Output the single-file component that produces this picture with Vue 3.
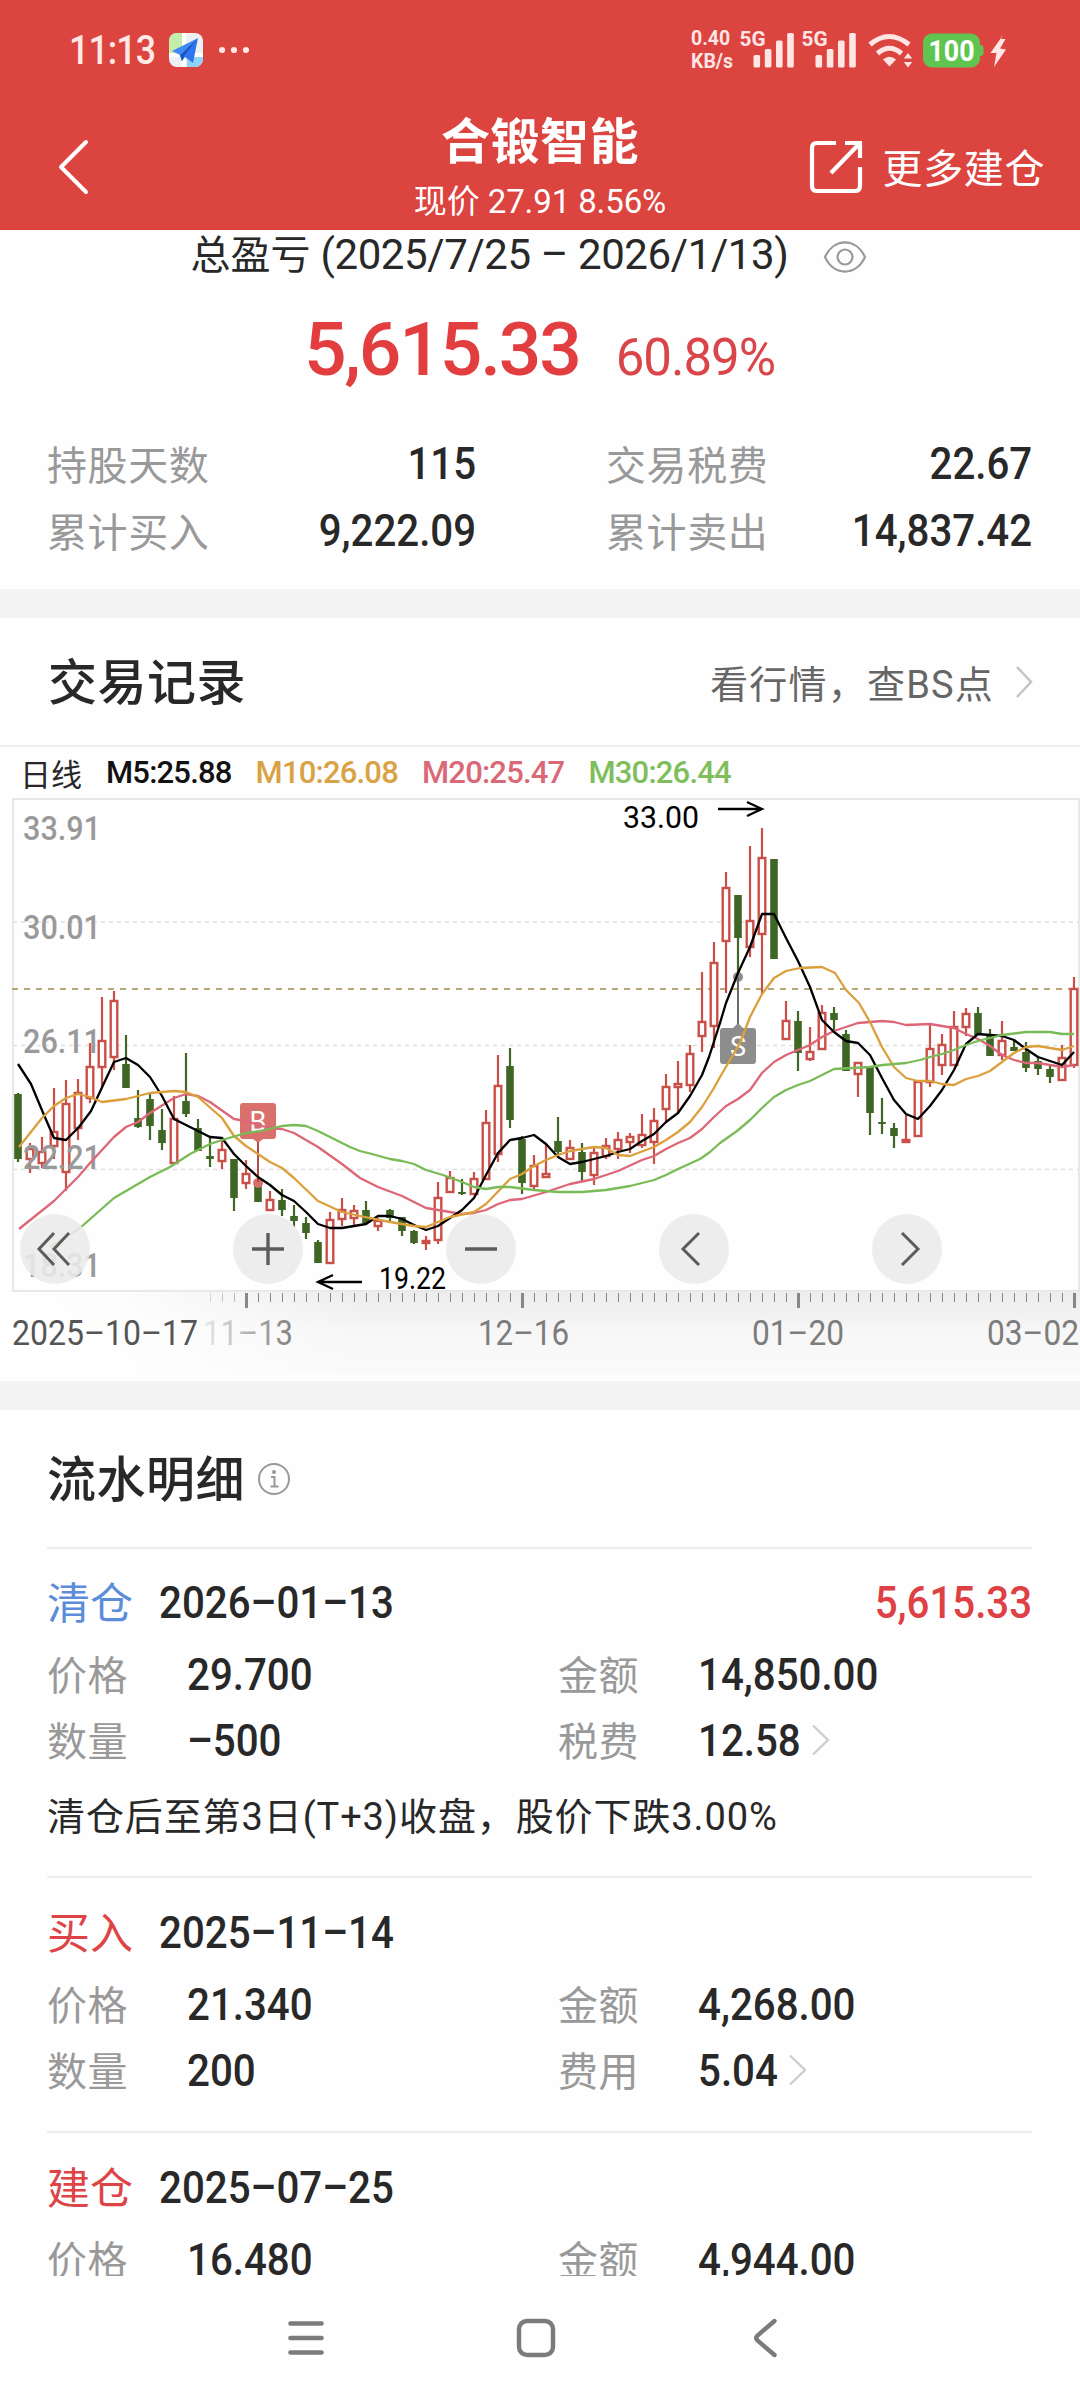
<script setup>
// Candles: [direction, high, bodyTop, bodyBottom, low], one every 12px from x=18
const raw = [
  'G 1093 1094 1159 1162', 'R 1143 1149 1159 1173', 'R 1137 1152 1163 1168', 'R 1088 1132 1146 1159',
  'R 1080 1104 1172 1191', 'R 1079 1093 1128 1140', 'R 1043 1067 1098 1103', 'R 997 1041 1067 1088',
  'R 991 1001 1057 1070', 'G 1035 1064 1088 1088', 'G 1090 1118 1127 1128', 'G 1093 1099 1126 1140',
  'G 1109 1130 1143 1150', 'R 1096 1119 1163 1163', 'G 1053 1101 1114 1117', 'G 1119 1128 1151 1151',
  'G 1137 1156 1159 1167', 'R 1137 1150 1161 1169', 'G 1159 1159 1198 1211', 'R 1160 1174 1183 1189',
  'G 1184 1184 1202 1202', 'R 1191 1200 1210 1210', 'G 1189 1200 1210 1216', 'G 1205 1216 1221 1227',
  'G 1217 1223 1233 1239', 'G 1240 1242 1263 1263', 'R 1212 1220 1263 1263', 'R 1198 1210 1219 1226',
  'R 1205 1211 1218 1226', 'G 1201 1210 1223 1223', 'R 1218 1221 1226 1231', 'G 1209 1210 1218 1223',
  'G 1217 1217 1231 1236', 'G 1230 1231 1243 1244', 'R 1236 1241 1243 1250', 'R 1182 1198 1240 1244',
  'R 1171 1178 1192 1193', 'G 1179 1192 1194 1195', 'R 1172 1179 1194 1194', 'R 1110 1123 1179 1180',
  'R 1055 1086 1154 1162', 'G 1048 1066 1120 1128', 'G 1136 1139 1183 1194', 'R 1155 1166 1186 1189',
  'R 1145 1174 1177 1177', 'G 1117 1141 1152 1157', 'R 1140 1148 1159 1159', 'G 1143 1152 1172 1181',
  'R 1147 1153 1175 1185', 'R 1138 1146 1156 1159', 'R 1132 1140 1149 1159', 'R 1133 1137 1142 1153',
  'R 1114 1135 1145 1148', 'R 1108 1121 1142 1164', 'R 1074 1087 1109 1121', 'R 1061 1084 1087 1112',
  'R 1045 1054 1085 1092', 'R 972 1022 1036 1052', 'R 942 963 1026 1048', 'R 872 888 941 993',
  'G 895 895 938 977', 'R 846 921 947 957', 'R 828 858 934 994', 'G 859 859 959 959',
  'R 1001 1021 1039 1039', 'G 1011 1021 1053 1071', 'R 1027 1052 1059 1061', 'R 1005 1013 1049 1049',
  'G 1007 1013 1020 1033', 'G 1030 1034 1071 1071', 'R 1062 1063 1074 1097', 'G 1067 1067 1113 1135',
  'G 1098 1122 1124 1134', 'G 1123 1128 1136 1148', 'R 1115 1140 1142 1142', 'R 1081 1082 1136 1136',
  'R 1025 1049 1082 1087', 'R 1034 1045 1065 1075', 'R 1011 1027 1065 1066', 'R 1008 1014 1027 1036',
  'G 1007 1013 1035 1035', 'G 1029 1034 1056 1056', 'R 1021 1041 1055 1060', 'G 1041 1047 1051 1051',
  'G 1042 1052 1068 1072', 'G 1057 1061 1069 1075', 'G 1065 1069 1077 1083', 'R 1045 1058 1080 1081',
  'R 977 989 1065 1068',
]
const candles = raw.map((s, i) => {
  const [t, h, a, b, l] = s.split(' ')
  return { up: t === 'R', h: +h, a: +a, b: +b, l: +l, x: 18 + 12 * i }
})

const lines = [
  { color: '#dd6678', pts: '19,1229 54,1201 78,1177 90,1163 114,1137 126,1127 138,1122 150,1113 174,1098 186,1094 198,1096 210,1102 234,1119 246,1121 258,1125 270,1128 282,1129 294,1133 306,1140 318,1147 342,1164 360,1178 378,1187 402,1196 426,1208 450,1212 462,1214 474,1213 486,1210 498,1204 510,1200 522,1199 546,1192 570,1184 594,1179 618,1171 642,1160 654,1156 666,1149 678,1143 690,1138 702,1129 714,1117 726,1106 738,1099 750,1090 762,1073 774,1062 786,1055 798,1050 810,1045 822,1037 834,1031 858,1023 882,1021 894,1022 906,1025 930,1024 942,1026 954,1028 966,1034 978,1039 990,1046 1002,1055 1014,1060 1026,1063 1038,1063 1062,1067 1074,1065' },
  { color: '#000', pts: '18,1064 31,1084 44,1115 54,1138 66,1140 79,1127 91,1111 105,1081 114,1062 126,1058 138,1065 150,1077 162,1096 174,1119 186,1125 198,1131 210,1137 222,1138 234,1154 246,1166 258,1177 270,1185 282,1195 294,1201 306,1212 318,1224 330,1228 342,1228 354,1226 366,1224 378,1216 390,1216 402,1219 414,1225 426,1230 438,1226 450,1218 462,1210 474,1198 486,1175 498,1153 510,1140 522,1138 534,1135 546,1144 558,1157 570,1164 582,1162 594,1159 606,1156 618,1152 630,1149 642,1141 654,1134 666,1122 678,1113 690,1096 702,1075 709,1057 720,1023 726,1003 738,973 750,947 762,914 774,914 786,938 798,961 810,987 822,1020 834,1032 846,1041 858,1043 870,1055 882,1078 894,1100 906,1114 918,1119 930,1106 942,1090 954,1070 966,1044 978,1034 990,1035 1002,1036 1014,1040 1026,1049 1038,1057 1050,1061 1062,1065 1074,1052' },
  { color: '#dba03c', pts: '19,1147 42,1118 54,1106 66,1098 78,1094 90,1097 102,1102 126,1099 150,1093 174,1091 186,1092 198,1097 222,1118 234,1136 246,1146 270,1162 282,1168 294,1178 318,1201 342,1212 360,1216 390,1222 414,1226 426,1227 438,1222 450,1217 474,1212 486,1204 510,1179 522,1174 534,1166 546,1160 558,1155 570,1151 594,1147 606,1148 618,1155 630,1156 654,1147 666,1140 678,1132 690,1122 702,1107 714,1088 720,1077 740,1043 750,1017 762,994 774,978 786,971 800,968 822,967 835,973 846,990 859,1003 870,1022 882,1047 894,1067 906,1078 918,1081 930,1081 942,1084 954,1085 966,1079 978,1076 990,1071 1002,1062 1014,1053 1026,1047 1038,1046 1062,1050 1074,1046' },
  { color: '#79bb56', pts: '50,1247 80,1228 114,1198 150,1177 170,1167 190,1154 210,1144 222,1140 246,1133 260,1131 282,1126 294,1125 306,1126 318,1131 350,1147 360,1151 372,1154 390,1159 402,1161 414,1164 426,1170 443,1175 462,1182 474,1187 486,1189 498,1187 510,1187 534,1190 558,1192 582,1192 606,1190 630,1186 654,1180 666,1175 678,1169 700,1159 710,1152 720,1143 737,1131 750,1120 762,1108 774,1097 786,1090 798,1085 810,1081 834,1069 870,1067 883,1065 906,1063 920,1060 930,1057 942,1054 954,1050 966,1045 978,1041 1002,1035 1026,1032 1050,1032 1062,1034 1074,1034' },
]

const priceLabels = [['33.91', 840], ['30.01', 939], ['26.11', 1053], ['22.21', 1169], ['18.31', 1277]]
const ticks = Array.from({ length: 73 }, (_, i) => 210 + 12 * i)
const isMajor = (x) => (x - 246) % 276 === 0

const legend = [
  { t: 'M5:25.88', c: '#111' },
  { t: 'M10:26.08', c: '#d9a245' },
  { t: 'M20:25.47', c: '#da6877' },
  { t: 'M30:26.44', c: '#7fbe5c' },
]

const stats = [
  ['持股天数', '115', '交易税费', '22.67'],
  ['累计买入', '9,222.09', '累计卖出', '14,837.42'],
]

const records = [
  { kind: '清仓', tone: 'blue', date: '2026–01–13', profit: '5,615.33', price: '29.700', amount: '14,850.00', qty: '–500', feeName: '税费', fee: '12.58', note: '清仓后至第3日(T+3)收盘，股价下跌3.00%' },
  { kind: '买入', tone: 'red', date: '2025–11–14', price: '21.340', amount: '4,268.00', qty: '200', feeName: '费用', fee: '5.04' },
  { kind: '建仓', tone: 'red', date: '2025–07–25', price: '16.480', amount: '4,944.00' },
]
</script>

<template>
  <div class="screen">
    <header class="top">
      <div class="status">
        <span class="clock">11:13</span>
        <svg class="app-ico" width="34" height="34" viewBox="0 0 34 34">
          <defs><clipPath id="appclip"><rect width="34" height="34" rx="8" /></clipPath></defs>
          <g clip-path="url(#appclip)">
            <rect width="34" height="34" fill="#eef1f2" />
            <path d="M0 0h13v20H0z" fill="#c4ecaa" />
            <path d="M18 24h16v10H18z" fill="#8fd3f5" />
            <path d="M13 0h4v34h-4zM0 20h34v4H0z" fill="#fff" />
            <path d="M29 5L3 18l8 4z" fill="#3f8bf4" />
            <path d="M29 5L11 22l2 6 3-4 8 6z" fill="#2f76ee" />
            <path d="M29 5L11 22l2 6 2-5z" fill="#1c54c4" />
          </g>
        </svg>
        <svg class="dots" width="30" height="8" viewBox="0 0 30 8" fill="#ffe9e7"><circle cx="3" cy="4" r="3.1" /><circle cx="15" cy="4" r="3.1" /><circle cx="27" cy="4" r="3.1" /></svg>
        <span class="speed"><b>0.40</b><b>KB/s</b></span>
        <svg width="320" height="60" viewBox="736 20 320 60" fill="#ffe6e4">
          <g class="g5"><text x="739.500" y="45.500" textLength="26" lengthAdjust="spacingAndGlyphs">5G</text><text x="801.500" y="45.500" textLength="26" lengthAdjust="spacingAndGlyphs">5G</text></g>
          <g v-for="o in [753.5, 815.5]" :key="o">
            <rect :x="o" y="55" width="6.600" height="12.500" rx="1.500" />
            <rect :x="o + 11.300" y="49" width="6.600" height="18.500" rx="1.500" />
            <rect :x="o + 22.500" y="40.500" width="6.600" height="27" rx="1.500" />
            <rect :x="o + 33.700" y="33" width="6.600" height="34.500" rx="1.500" />
          </g>
          <g fill="none" stroke="#ffe6e4" stroke-width="5">
            <path d="M870 44.500Q889 28.500 909 44.500" />
            <path d="M877.500 53.500Q889.500 43 901.500 53.500" />
          </g>
          <path d="M883 59.500Q889.500 54 896 59.500L889.500 66.500Z" />
          <path d="M908 53l4.200 5.500h-8.400zM908 67.500l4.200-5.500h-8.400z" />
          <rect x="923" y="33.500" width="57" height="34" rx="9" fill="#60c550" />
          <path d="M980 45q3.500 0 3.500 3v5q0 3-3.500 3z" fill="#60c550" />
          <text class="batt" x="928.500" y="60.500" textLength="46" lengthAdjust="spacingAndGlyphs">100</text>
          <path d="M1003 35L990.500 53h6L994 67l12-17.500-6-1 5.500-9.500h-4.500z" />
        </svg>
      </div>
      <div class="nav">
        <div class="nav-side">
          <svg width="32" height="58" viewBox="0 0 32 58" fill="none" stroke="#fff" stroke-width="4"><path d="M29 4L4 29l25 25" stroke-linecap="round" stroke-linejoin="round" /></svg>
        </div>
        <div class="nav-mid">
          <div class="title">合锻智能</div>
          <div class="sub">现价 27.91 8.56%</div>
        </div>
        <div class="nav-side right">
          <svg width="54" height="54" viewBox="0 0 54 54" fill="none" stroke="#fff" stroke-width="4.200"><path d="M27 3H8Q3 3 3 8v38q0 5 5 5h38q5 0 5-5V27" /><path d="M36 3h15v15M50 4L22 33" /></svg>
          <span>更多建仓</span>
        </div>
      </div>
    </header>

    <main class="content">
      <section class="summary">
        <div class="period">
          <span>总盈亏 <i class="range">(2025/7/25 – 2026/1/13)</i></span>
          <svg width="44" height="34" viewBox="0 0 44 34" fill="none" stroke="#999" stroke-width="2.200"><path d="M2 17C11 -2.500 33 -2.500 42 17C33 36.500 11 36.500 2 17Z" /><circle cx="22" cy="17" r="7.500" /></svg>
        </div>
        <div class="profit"><span class="big">5,615.33</span><span class="pct">60.89%</span></div>
        <div class="stats">
          <div v-for="s in stats" :key="s[0]" class="stat-row">
            <span class="label">{{ s[0] }}</span><span class="num end">{{ s[1] }}</span>
            <span class="label second">{{ s[2] }}</span><span class="num end">{{ s[3] }}</span>
          </div>
        </div>
      </section>

      <div class="band"></div>

      <section>
        <div class="sec-head">
          <h2>交易记录</h2>
          <span class="more">看行情，查BS点</span>
          <svg width="20" height="34" viewBox="0 0 20 34" fill="none" stroke="#c4c4c4" stroke-width="2.500"><path d="M3 2l14 15L3 32" /></svg>
        </div>
        <div class="legend">
          <span class="ri">日线</span>
          <span v-for="l in legend" :key="l.t" class="ma" :style="{ color: l.c }">{{ l.t }}</span>
        </div>
        <svg class="chart" width="1080" height="584" viewBox="0 797 1080 584">
          <defs>
            <linearGradient id="axisV" x1="0" y1="0" x2="0" y2="1"><stop offset="0" stop-color="#ececec" /><stop offset=".5" stop-color="#f7f7f7" /><stop offset="1" stop-color="#fafafa" /></linearGradient>
            <linearGradient id="axisH"><stop offset="0" stop-color="#fff" /><stop offset=".12" stop-color="#fff" stop-opacity=".85" /><stop offset=".34" stop-color="#fff" stop-opacity="0" /></linearGradient>
            <linearGradient id="fade" gradientUnits="userSpaceOnUse" x1="200" y1="0" x2="285" y2="0"><stop offset="0" stop-color="#888" stop-opacity=".12" /><stop offset="1" stop-color="#888" /></linearGradient>
          </defs>
          <rect x="0" y="1291" width="1080" height="84" fill="url(#axisV)" />
          <rect x="0" y="1291" width="1080" height="84" fill="url(#axisH)" />
          <path d="M13 1291V799H1079V1291Z" fill="none" stroke="#e8e8e8" stroke-width="2" />
          <path d="M13 922H1079M13 1045.500H1079M13 1169.500H1079" stroke="#e0e0e0" stroke-width="1.300" stroke-dasharray="4 4" />
          <path d="M12 989H1079" stroke="#b9a877" stroke-width="2" stroke-dasharray="6 6" />

          <g v-for="c in candles" :key="c.x">
            <path :d="`M${c.x} ${c.h}V${c.a}M${c.x} ${c.b}V${c.l}`" :stroke="c.up ? '#c94f49' : '#3f6625'" stroke-width="2.200" />
            <rect v-if="c.up" :x="c.x - 3.300" :y="c.a" width="6.600" :height="Math.max(c.b - c.a, 1)" fill="#fffafa" stroke="#c94f49" stroke-width="2.400" />
            <rect v-else :x="c.x - 3.800" :y="c.a" width="7.600" :height="c.b - c.a" fill="#3f6625" />
          </g>

          <g class="price"><text v-for="p in priceLabels" :key="p[0]" x="23" :y="p[1]" textLength="78" lengthAdjust="spacingAndGlyphs">{{ p[0] }}</text></g>

          <g fill="#da706c">
            <path d="M243 1103h30q3 0 3 3v30q0 3-3 3h-10l-5 4-5-4h-10q-3 0-3-3v-30q0-3 3-3z" />
            <circle cx="258" cy="1183" r="5" /><rect x="257" y="1142" width="2" height="40" fill="#b34a48" />
          </g>
          <text class="mark" x="258" y="1131" text-anchor="middle">B</text>
          <g fill="#8d8d8d">
            <path d="M723 1028h10l5-5 5 5h10q3 0 3 3v30q0 3-3 3h-30q-3 0-3-3v-30q0-3 3-3z" />
            <circle cx="738" cy="977" r="5" /><rect x="737" y="977" width="2" height="47" fill="#6c6c6c" />
          </g>
          <text class="mark" x="738" y="1056" text-anchor="middle">S</text>

          <polyline v-for="l in lines" :key="l.color" :points="l.pts" fill="none" :stroke="l.color" stroke-width="2.300" stroke-linejoin="round" />

          <g fill="none" stroke="#000" stroke-width="2.300"><path d="M718 809H761M747 802l15 7-15 7" /><path d="M319 1282H362M333 1275l-15 7 15 7" /></g>
          <g class="peak">
            <text x="623" y="828" textLength="76" lengthAdjust="spacingAndGlyphs">33.00</text>
            <text x="379" y="1289" textLength="67" lengthAdjust="spacingAndGlyphs">19.22</text>
          </g>

          <g v-for="t in ticks" :key="t">
            <rect v-if="isMajor(t)" :x="t - 1" y="1293" width="3" height="15" fill="#888" />
            <rect v-else :x="t" y="1293" width="1" height="9" fill="#888" :opacity="t < 246 ? .3 + (t - 210) / 90 : 1" />
          </g>
          <g class="dates">
            <text x="12" y="1345" textLength="186" lengthAdjust="spacingAndGlyphs" fill="#555">2025–10–17</text>
            <text x="203" y="1345" textLength="90" lengthAdjust="spacingAndGlyphs" fill="url(#fade)">11–13</text>
            <text x="478" y="1345" textLength="91" lengthAdjust="spacingAndGlyphs">12–16</text>
            <text x="752" y="1345" textLength="92" lengthAdjust="spacingAndGlyphs">01–20</text>
            <text x="987" y="1345" textLength="92" lengthAdjust="spacingAndGlyphs">03–02</text>
          </g>

          <g fill="#ebebeb" fill-opacity=".88"><circle v-for="x in [55, 268, 481, 694, 907]" :key="x" :cx="x" cy="1249" r="35" /></g>
          <g fill="none" stroke="#5c5c5c" stroke-width="3">
            <path d="M54 1233l-15 16 15 16M69 1233l-15 16 15 16" />
            <path d="M252 1249h32M268 1233v32M465 1249h32" stroke-width="3.400" />
            <path d="M699 1233l-16 16 16 16M902 1233l16 16-16 16" />
          </g>
        </svg>
      </section>

      <div class="band"></div>

      <section class="detail">
        <div class="detail-head">
          <h2>流水明细</h2>
          <svg width="34" height="34" viewBox="0 0 34 34" fill="none" stroke="#999" stroke-width="2"><circle cx="17" cy="17" r="15" /><path d="M14 15h3.500v9M13.500 24.500h8" /><circle cx="17" cy="10" r="2" fill="#999" stroke="none" /></svg>
        </div>
        <article v-for="r in records" :key="r.date" class="record">
          <div class="rec-head">
            <span class="kind" :class="r.tone">{{ r.kind }}</span>
            <span class="num">{{ r.date }}</span>
            <span v-if="r.profit" class="num end gain">{{ r.profit }}</span>
          </div>
          <div class="rec-row tall">
            <span class="label">价格</span><span class="num">{{ r.price }}</span>
            <span class="label">金额</span><span class="num">{{ r.amount }}</span>
          </div>
          <div v-if="r.qty" class="rec-row">
            <span class="label">数量</span><span class="num">{{ r.qty }}</span>
            <span class="label">{{ r.feeName }}</span>
            <span class="fee"><span class="num" :class="r.fee.length > 4 ? 'f5' : 'f4'">{{ r.fee }}</span>
              <svg width="18" height="32" viewBox="0 0 18 32" fill="none" stroke="#ccc" stroke-width="2.300"><path d="M1 1.500l15 14.500L1 30.500" /></svg></span>
          </div>
          <p v-if="r.note" class="note">{{ r.note }}</p>
        </article>
      </section>
    </main>

    <footer class="keys">
      <svg width="36" height="36" viewBox="0 0 36 36" stroke="#7b7b7b" stroke-width="4.600" stroke-linecap="round"><path d="M2.500 3.500h31M2.500 18h31M2.500 32.500h31" /></svg>
      <svg class="home" width="40" height="40" viewBox="0 0 40 40" fill="none" stroke="#7b7b7b" stroke-width="4.400"><rect x="3" y="3" width="34" height="34" rx="8" /></svg>
      <svg width="26" height="40" viewBox="0 0 26 40" fill="none" stroke="#7b7b7b" stroke-width="4.400" stroke-linecap="round"><path d="M22.500 3L5.500 17.500q-2.500 2.500 0 5L22.500 37" /></svg>
    </footer>
  </div>
</template>

<style>
body { background: #fff; }
</style>

<style scoped>
* { box-sizing: border-box; }
.screen { width: 1080px; height: 2400px; overflow: hidden; display: flex; flex-direction: column; background: #fefefe; color: #282828; font-family: Roboto, "Noto Sans CJK SC", sans-serif; }
i { font-style: normal; }
h2 { margin: 0; padding-top: 4px; font-size: 49px; font-weight: 500; line-height: 60px; letter-spacing: .5px; }
svg { display: block; flex: none; }

.top { height: 230px; flex: none; background: #dc4440; color: #fff; }
.status { height: 100px; display: flex; align-items: center; padding-left: 69px; }
.clock { width: 100px; font-size: 41px; font-weight: 500; letter-spacing: -1px; transform: scaleX(.87); transform-origin: left center; color: #ffe9e7; }
.dots { margin-left: 16px; }
.speed { width: 44px; margin-left: 442px; margin-right: 1px; display: flex; flex-direction: column; font-size: 19.500px; line-height: 23px; color: #ffe6e4; white-space: nowrap; }
.speed b { font-weight: 700; }
.g5 { font: 700 20px Roboto; }
.batt { font: 700 29px Roboto; fill: #fff; }
.nav { display: flex; height: 130px; padding: 1px 35px 0 57px; }
.nav-side { width: 300px; height: 132px; display: flex; align-items: center; }
.nav-side.right { width: 322px; justify-content: flex-end; font-size: 40px; gap: 20px; letter-spacing: .6px; }
.nav-side.right span { padding-bottom: 3px; }
.nav-mid { flex: 1; display: flex; flex-direction: column; align-items: center; white-space: nowrap; }
.title { font-size: 49px; font-weight: 700; line-height: 84px; letter-spacing: .5px; }
.sub { font-size: 33px; line-height: 34px; letter-spacing: -.1px; }

.content { height: 2046px; flex: none; overflow: hidden; }
.summary { height: 359px; padding: 0 48px 0 47px; }
.period { height: 52px; display: flex; align-items: center; justify-content: center; gap: 35px; font-size: 40px; padding-right: 21px; white-space: nowrap; }
.period span { line-height: 48px; padding-bottom: 2px; }
.period svg { margin-top: 2px; }
.range { font-size: 42px; letter-spacing: -.4px; }
.profit { height: 132px; display: flex; justify-content: center; align-items: baseline; gap: 36px; color: #e33e3f; line-height: 134px; }
.big { font-size: 75px; font-weight: 500; letter-spacing: -2.200px; }
.pct { font-size: 51px; letter-spacing: -1px; color: #d94548; }
.stats { padding-top: 16px; }
.stat-row { height: 67px; display: grid; grid-template-columns: 190px 239px 320px 236px; align-items: center; }
.second { padding-left: 130px; }
.label { font-size: 40px; color: #999; letter-spacing: .6px; padding-bottom: 2px; white-space: nowrap; }
.num { font-size: 44px; font-weight: 500; transform: scaleX(.915); transform-origin: left center; white-space: nowrap; padding-top: 1px; }
.num.end { margin-left: auto; transform-origin: right center; }

.band { height: 29px; background: #f4f4f4; }
.sec-head { height: 129px; padding: 0 46px 0 48px; display: flex; align-items: center; border-bottom: 2px solid #ededed; }
.more { margin-left: auto; margin-right: 20px; font-size: 38px; color: #666; letter-spacing: 1.200px; }
.legend { height: 50px; padding-left: 20px; display: flex; align-items: center; font-size: 31px; white-space: nowrap; }
.ri { width: 86px; }
.ma { font-weight: 500; margin-right: 24px; letter-spacing: -.8px; }
.price { font: 500 34px Roboto; fill: #999; }
.mark { font: 400 27px Roboto; fill: #fff; }
.peak { font: 400 31px Roboto; fill: #000; }
.dates { font: 400 35px Roboto; fill: #7c7c7c; }

.detail { padding: 0 48px 0 47px; }
.detail-head { height: 137px; display: flex; align-items: center; gap: 12px; }
.record { border-top: 2px solid #ededed; padding: 18px 0 35px; }
.record:nth-child(2) { padding: 17px 0 10px; }
.rec-head { height: 72px; display: flex; align-items: center; }
.kind { width: 112px; font-size: 43px; padding-bottom: 4px; }
.blue { color: #5b8ddb; }
.red { color: #de4446; }
.gain { color: #dd4144; }
.rec-row { height: 56px; display: grid; grid-template-columns: 140px 371px 140px 1fr; align-items: center; }
.rec-row.tall { height: 72px; }
.fee { display: flex; align-items: center; }
.f5 { width: 114px; }
.f4 { width: 91px; }
.note { margin: 0; height: 100px; line-height: 102px; font-size: 38px; letter-spacing: .9px; white-space: nowrap; }

.keys { flex: 1; display: flex; align-items: center; padding-left: 288px; }
.home { margin: 0 196px 0 192px; }
</style>
